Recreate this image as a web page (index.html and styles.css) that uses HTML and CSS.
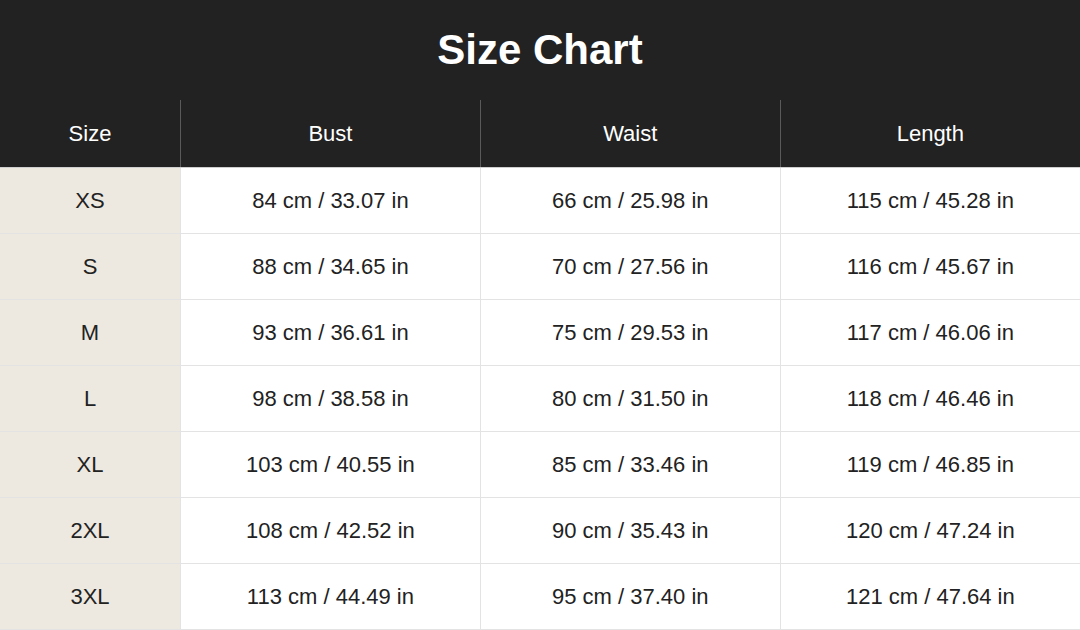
FILE: index.html
```html
<!DOCTYPE html>
<html>
<head>
<meta charset="utf-8">
<link rel="stylesheet" href="styles.css">
</head>
<body>
<div class="chart">
  <div class="title">Size Chart</div>
  <table class="sizes">
    <thead>
      <tr><th class="c-size">Size</th><th>Bust</th><th>Waist</th><th>Length</th></tr>
    </thead>
    <tbody>
      <tr><td class="size">XS</td><td>84 cm / 33.07 in</td><td>66 cm / 25.98 in</td><td>115 cm / 45.28 in</td></tr>
      <tr><td class="size">S</td><td>88 cm / 34.65 in</td><td>70 cm / 27.56 in</td><td>116 cm / 45.67 in</td></tr>
      <tr><td class="size">M</td><td>93 cm / 36.61 in</td><td>75 cm / 29.53 in</td><td>117 cm / 46.06 in</td></tr>
      <tr><td class="size">L</td><td>98 cm / 38.58 in</td><td>80 cm / 31.50 in</td><td>118 cm / 46.46 in</td></tr>
      <tr><td class="size">XL</td><td>103 cm / 40.55 in</td><td>85 cm / 33.46 in</td><td>119 cm / 46.85 in</td></tr>
      <tr><td class="size">2XL</td><td>108 cm / 42.52 in</td><td>90 cm / 35.43 in</td><td>120 cm / 47.24 in</td></tr>
      <tr><td class="size">3XL</td><td>113 cm / 44.49 in</td><td>95 cm / 37.40 in</td><td>121 cm / 47.64 in</td></tr>
    </tbody>
  </table>
</div>
</body>
</html>
```
FILE: styles.css
```css
html, body {
  margin: 0;
  padding: 0;
  background: #ffffff;
}
body {
  font-family: "Liberation Sans", Arial, sans-serif;
  color: #222222;
  width: 1080px;
  height: 630px;
  overflow: hidden;
}
.chart {
  width: 1080px;
}
.title {
  background: #222222;
  color: #ffffff;
  height: 100px;
  line-height: 100px;
  text-align: center;
  font-size: 42px;
  font-weight: bold;
}
.sizes {
  width: 1080px;
  border-collapse: collapse;
  table-layout: fixed;
}
.sizes th {
  background: #222222;
  color: #ffffff;
  font-weight: normal;
  font-size: 22px;
  height: 67px;
  padding: 0;
  border-left: 1px solid #5a5a5a;
  border-bottom: 1px solid #cfcfcf;
}
.sizes th:first-child {
  border-left: none;
}
.sizes .c-size {
  width: 180px;
}
.sizes td {
  font-size: 22px;
  text-align: center;
  height: 65px;
  padding: 0;
  border-left: 1px solid #e3e3e3;
  border-bottom: 1px solid #e3e3e3;
  color: #222222;
}
.sizes td.size {
  background: #ede9e0;
  border-left: none;
}
```
